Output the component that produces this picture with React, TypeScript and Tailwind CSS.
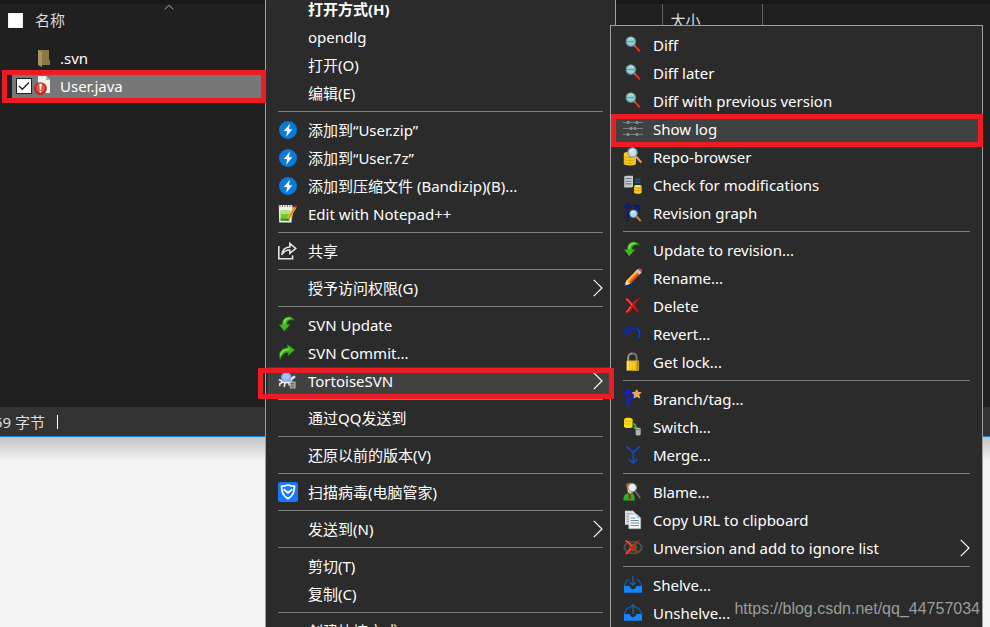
import type { ReactNode } from "react";

type MenuEntry =
    | { kind: "separator" }
    | {
        kind: "item";
        label: string;
        icon?: ReactNode;
        bold?: boolean;
        active?: boolean;
        submenu?: boolean;
    };

function Icon({ children }: { children: ReactNode }) {
    return (
        <svg viewBox="0 0 20 20" className="h-5 w-5" fill="none" aria-hidden="true">
        {children}
        </svg>
    );
}

function BandizipIcon() {
    return (
        <Icon>
        <circle cx="10" cy="10" r="9" fill="#0a7bdb" />
        <path d="M11.8 3.8 5.8 11H9l-.7 5.8 6-7.6H11z" fill="#fff" />
        </Icon>
    );
}

function NotepadIcon() {
    return (
        <Icon>
        <path d="M.8 1h13.6l-1.2 17.5H1.2z" fill="#f1f1ec" />
        <path d="M2.4 6.5h9.8l-.8 10.3H2.6z" fill="#74c52c" />
        <path d="M2.4 6.5h9.8l-.2 3.4H2.4z" fill="#b7e37e" />
        <path d="M2.6 14.5h9l-.2 2.3H2.6z" fill="#3f9a1f" />
        <path d="M2 1v2M4.5 1v2M7 1v2M9.5 1v2M12 1v2" stroke="#777" />
        <path d="M14.5 3 15 6l-2 12.5" stroke="#b5b5b5" />
        <path d="m16.2 2 2.5 1.6-7.6 11.6-2.6 1.6.3-3z" fill="#f4ae28" />
        <path d="m17.6 2.8-7.4 12.1" stroke="#d17d12" />
        <path d="m8.8 14.4-.3 2.4 2-1.2z" fill="#3a2b17" />
        <path d="m16.8.8 2.4 1.5-.8 1.6-2.6-1.5z" fill="#b91e29" />
        </Icon>
    );
}

function ShareIcon() {
    return (
        <Icon>
        <path d="M.8 5v12.8h13.8v-3.4" stroke="#e4e4e4" strokeWidth="1.6" />
        <path
            d="M3.8 13.8C4.2 9.1 6.8 6.3 11.8 6V2.4l6 5-6 5V9.1c-3.6 0-6.2 1.5-8 4.7z"
            stroke="#e4e4e4"
            strokeWidth="1.5"
        />
        </Icon>
    );
}

function UpdateIcon() {
    return (
        <Icon>
        <path
            d="M16.5 5.3C14.6 1.8 9.9.9 6.8 3.2 4.9 4.6 4.2 6.6 4.3 9.5H1.2l5 6.7 5.9-6.7H9c-.2-3.6 2.6-5.7 7.5-4.2z"
            fill="#43b824"
            stroke="#237c16"
            strokeWidth=".7"
        />
        <path d="M6 9c-.2-3.6 2.4-5.9 6.3-5.8" stroke="#92e765" strokeWidth="1.3" />
        </Icon>
    );
}

function CommitIcon() {
    return (
        <Icon>
        <path
            d="M2.2 16.5C-.2 10.7 2.5 5.5 9.6 4.8V1.6L16.6 7l-6.4 5.7V9.4c-4 0-6.5 2.2-8 7.1z"
            fill="#43b824"
            stroke="#237c16"
            strokeWidth=".7"
        />
        <path d="M2.6 12.5c.5-4 3.3-6.2 8.2-6.2" stroke="#92e765" strokeWidth="1.3" />
        </Icon>
    );
}

function TortoiseIcon() {
    return (
        <Icon>
        <path d="m.8 8.6 3.4 1.2M4.6 11.4 2 12.4l-.4 2.8M7 12l-.8 4M10.8 11.6l.6 3" stroke="#dfe3ea" strokeWidth="1.7" />
        <path d="m12.5 9 4.6-4" stroke="#e7eaf0" strokeWidth="2.4" />
        <ellipse cx="8.3" cy="6.2" rx="5.2" ry="4.8" fill="#91b0ef" />
        <ellipse cx="8" cy="5.6" rx="3" ry="2.6" fill="#a9c4f8" />
        <path d="M3 9.8c3 2.4 7.6 2.4 10.8 0" stroke="#f5f5f5" strokeWidth="1.6" />
        <path d="M15.8 1.5h3v3l-1.5 1.2-1.8-1.6z" fill="#125f8e" />
        <path d="M11.8 10.5h5.8v7h-5.8z" fill="#a9a9a9" />
        <path d="M13 12.5h3.2M13 14.2h3.2M13 15.9h3.2" stroke="#555" strokeWidth=".8" />
        </Icon>
    );
}

function ShieldIcon() {
    return (
        <Icon>
        <rect width="20" height="20" rx="2.5" fill="#1677ff" />
        <path d="M10 3c2 .8 4 1.1 6.4 1.1.3 6.4-1.5 9.8-6.4 12.6-4.9-2.8-6.7-6.2-6.4-12.6C6 4.1 8 3.8 10 3z" stroke="#fff" strokeWidth="1.8" />
        <path d="m5.7 7.3 4.3 3.5 4.3-3.5" stroke="#fff" strokeWidth="1.8" />
        </Icon>
    );
}

function DiffIcon() {
    return (
        <Icon>
        <path d="m11.5 10.5 5.3 5.8" stroke="#e9301c" strokeWidth="2" />
        <path d="m10.7 9.7 1.5 1.6" stroke="#888" strokeWidth="2" />
        <circle cx="7.8" cy="6.6" r="4.7" fill="#8fd2d9" stroke="#75868a" strokeWidth="1.2" />
        <path d="M4.3 6.6h7" stroke="#4e9fac" />
        <path d="M5 4.6c1-1.7 3.5-2.2 5-.6" stroke="#d4f4f5" />
        </Icon>
    );
}

function LogIcon() {
    return (
        <Icon>
        <path d="M0 3.5h20M0 9.5h20M0 15.5h20" stroke="#7e7e7e" />
        <path d="M5 2v3M14 2v3M8 8v3M12 8v3M5 14v3M14 14v3" stroke="#8b8b8b" strokeWidth="2.4" />
        </Icon>
    );
}

function RepoIcon() {
    return (
        <Icon>
        <path d="M.8 6.5c0-2.5 12.2-2.5 12.2 0v10c0 2.6-12.2 2.6-12.2 0z" fill="#f6cf22" />
        <path d="M.8 9.4c1 1.6 11 1.6 12.2 0M.8 12.2c1 1.6 11 1.6 12.2 0M.8 15c1 1.6 11 1.6 12.2 0M7 8v10" stroke="#d19a0a" strokeWidth=".8" />
        <path d="m13 9.5 5.3 6" stroke="#dba56b" strokeWidth="2" />
        <circle cx="9.5" cy="5.4" r="4.6" fill="#c4def0" stroke="#8796a3" strokeWidth="1.2" />
        <path d="M7 4.6c.5-1.5 2-2.1 3.6-1.6" stroke="#fff" />
        </Icon>
    );
}

function ModificationsIcon() {
    return (
        <Icon>
        <path d="M1.2 1.5 3 .8h7v11l-1.2.8H1.2z" fill="#c3c9cd" />
        <path d="M2.5 3.5h6M2.5 6.2h6M2.5 8.9h6" stroke="#717b82" strokeWidth="1.1" />
        <path d="M12 4.5h5.5M12 7.3h5.5" stroke="#0c638e" strokeWidth="1.5" />
        <path d="M11 11.2c0-1.7 7.6-1.7 7.6 0v6.2c0 1.7-7.6 1.7-7.6 0z" fill="#f7cf1d" />
        <path d="M11 12.2c1.2 1.2 6.6 1.2 7.6 0M11 14.8c1.2 1.2 6.6 1.2 7.6 0" stroke="#c88f0b" strokeWidth=".8" />
        <ellipse cx="14.8" cy="11.1" rx="3" ry=".9" fill="#fff177" />
        </Icon>
    );
}

function GraphIcon() {
    return (
        <Icon>
        <path d="M4.5 19V2M.5 5l4-3.5L8.5 5M5 12l10-9M9.8 2.7h6v5.6" stroke="#0b187d" strokeWidth="1.8" />
        <path d="m13.5 13.5 4.2 4.7" stroke="#ef7b24" strokeWidth="2" />
        <circle cx="10.5" cy="10.8" r="3.8" fill="#b7dcf2" stroke="#728da4" />
        <path d="M8.6 10c.5-1.3 1.5-1.8 2.8-1.5" stroke="#fff" />
        </Icon>
    );
}

function RenameIcon() {
    return (
        <Icon>
        <path d="M1.5 17.8 3.7 12 14 1.7l3.8-.5.4 3.8L7.5 15.8z" fill="#f37b1b" />
        <path d="M4.5 13 14 3.2" stroke="#ffc061" strokeWidth="1.7" />
        <path d="m7.2 15 9.3-9.4" stroke="#ca3a13" strokeWidth="1.4" />
        <path d="m12.6 3 2-2 3.7.1.2 3.5-2.1 2z" fill="#c8c8c5" />
        <path d="m14.7 1 1.8-.8 2 1.5-.4 2.6z" fill="#dc4338" />
        <path d="M1.5 17.8 3.6 12l3.8 3.8z" fill="#f4d5a2" />
        <path d="M1 18.2 2 16l1.6 1.6z" fill="#283a8d" />
        <path d="M3 18.5h8" stroke="#142c78" />
        </Icon>
    );
}

function DeleteIcon() {
    return (
        <Icon>
        <path d="M2 3c2-2.5 3.8-.5 7.7 4.2C12.3 4.1 15 2.1 18 1.8c-3 2-5 4.4-6.7 7.2l4.7 6.4-2 .4-4.2-4.3c-1.6 2.8-3.5 5.4-6 5.8-1.6-.2-1.7-1.4.2-3.2L7.6 9z" fill="#d41515" />
        <path d="M3 3.2c2.3.7 4.4 3.8 6.2 6M3.7 15.8c1.5-1.5 3-3.5 4.2-5.2" stroke="#f47d70" />
        </Icon>
    );
}

function RevertIcon() {
    return (
        <Icon>
        <path
            d="M1.2 2.6v7.6h8L6.3 7.6c2-1.9 4.9-2.4 7-1 2.5 1.7 2.7 5.4.9 9.8 3.4-2.7 4.7-7.4 2.3-11-2.6-3.7-8.4-4-12.4-.2z"
            fill="#0929a6"
        />
        <path d="M13.6 3.8c3.4 2.2 3.8 6.4 2 10.2" stroke="#1e4fd0" />
        </Icon>
    );
}

function LockIcon() {
    return (
        <Icon>
        <path d="M5.4 10V5.2c0-5 8.2-5 8.2 0V10" stroke="#77766f" strokeWidth="2" />
        <path d="M5 9V5c.3-2.3 2-3.4 4-3.5" stroke="#bcbcb4" strokeWidth=".8" />
        <rect x="3.5" y="8.5" width="12.4" height="10.3" rx=".8" fill="#edbd19" />
        <path d="M5 9.5v8.4" stroke="#fff073" strokeWidth="1.5" />
        <path d="M14.5 9v9.3" stroke="#b77d08" strokeWidth="1.8" />
        <path d="M7.8 10v7.5M10.8 10v7.5" stroke="#f8da42" />
        </Icon>
    );
}

function BranchIcon() {
    return (
        <Icon>
        <path d="M4.5 18.8V1.5M.5 5l4-3.8L8.5 5M4.8 12.8l5-4.2V5" stroke="#1020df" strokeWidth="1.8" />
        <path d="m8 9 3.8-2.2" stroke="#1020df" strokeWidth="1.8" />
        <path d="m13.7.7 1.3 2.7 3 .2-2.2 2.2.9 3-3-1.4-2.6 1.5.5-3.1-2.3-2 3.1-.6z" fill="#f5a33c" stroke="#ffe0a1" strokeWidth=".6" />
        </Icon>
    );
}

function SwitchIcon() {
    return (
        <Icon>
        <path d="M1 2.5c0-2.2 8.6-2.2 8.6 0v7c0 2-8.6 2-8.6 0z" fill="#fbdc16" />
        <path d="M1 3.4c1.2 1.2 7.4 1.2 8.6 0M1 6.4c1.2 1.2 7.4 1.2 8.6 0" stroke="#dcb010" strokeWidth=".7" />
        <path d="M9 6c3.4-.3 4.7 1.2 4.5 4h1.7l-3.1 2.8L9.8 10h1.8c0-1.7-.8-2.4-2.6-2.4z" fill="#43af22" />
        <path d="M12.7 11.8c0-1.3 5-1.3 5 0v5.8c0 1.3-5 1.3-5 0z" fill="#b1b4b5" />
        <path d="M12.7 12.3c.8.7 4.2.7 5 0" stroke="#707577" />
        </Icon>
    );
}

function MergeIcon() {
    return (
        <Icon>
        <path d="m3.5 1.5 6.8 6 6.5-6M10.3 7.3V18M6 14l4.3 4.2 4.3-4.2" stroke="#124bb9" strokeWidth="1.9" />
        </Icon>
    );
}

function BlameIcon() {
    return (
        <Icon>
        <path d="M3 2.6C4.5.4 9-.2 11 2.5v6.8L8 12 4.8 10.2z" fill="#a86a38" />
        <path d="M4.7 4.5h4.5v5.7L7 12l-2.3-2z" fill="#efc394" />
        <path d="M.4 18.4c0-4.5 1.4-6.4 4.2-7.1L6.5 13l2.7-2c2.2 1.3 2.8 4 2.5 7.4z" fill="#28b321" />
        <path d="m6 12 1.4-.2.8 4.3-1.3 1.6-1.4-1.6z" fill="#bd1915" />
        <circle cx="9.3" cy="5.6" r="4.2" fill="#e9eff1" stroke="#888f91" />
        <path d="m12.3 9.3 5 6.8" stroke="#858585" strokeWidth="1.2" />
        </Icon>
    );
}

function CopyIcon() {
    return (
        <Icon>
        <path d="M2 .8h8l3 3v11H2z" fill="#d9dfe4" />
        <path d="M3.5 4h5M3.5 6.5h3M3.5 9h3M3.5 11.5h3" stroke="#8c9db2" />
        <path d="M5.8 4.2h8L17.7 8v10.7H5.8z" fill="#f7f8f9" stroke="#a9b0b7" strokeWidth=".6" />
        <path d="M13.6 4.5v3.7h4" fill="#b8c2ce" />
        <path d="M7.6 8h4.5M7.6 10.5H16M7.6 13H16M7.6 15.5H16" stroke="#6c8aad" strokeWidth="1.1" />
        </Icon>
    );
}

function UnversionIcon() {
    return (
        <Icon>
        <ellipse cx="10" cy="9.5" rx="8.6" ry="5.8" stroke="#4f5150" strokeWidth="2" />
        <circle cx="10" cy="9.5" r="4.4" fill="#168d31" stroke="#154523" strokeWidth="1.5" />
        <path d="M2 3.2c2.7-2 4.8.8 7.6 3.7 2.4-2.8 5.2-5.2 7.7-5.5-2.3 2.4-4.4 5-5.7 7.4l3.8 5-1.9.7-3.8-3.4C7.4 14.2 5 16.8 2.2 17c1-3 3.1-5.9 5.2-8.2z" fill="#d41d1b" />
        <path d="M2.5 2.8c2 0 4.3 3.1 6.3 5.2M3 16c1.5-1.4 3-3.6 4.7-5.5" stroke="#f28070" />
        </Icon>
    );
}

function ShelfIcon({ up = false }: { up?: boolean }) {
    return (
        <Icon>
        <path d="M1 11.2 4.2 5h2.5M13.3 5h2.4L19 11.2" stroke="#1762ac" strokeWidth="1.1" />
        <path d="M1 11h5.7c.4 4.2 6.2 4.2 6.6 0H19v6.8H1z" fill="#1683ff" />
        <path d={up ? "M10 11V2M6.5 5.2 10 1.7l3.5 3.5" : "M10 1v9M7 7.2l3 3 3-3"} stroke="#176bb9" strokeWidth="1.1" />
        </Icon>
    );
}

const separator: MenuEntry = { kind: "separator" };

const fileMenu: MenuEntry[] = [
    { kind: "item", label: "打开方式(H)", bold: true },
    { kind: "item", label: "opendlg" },
    { kind: "item", label: "打开(O)" },
    { kind: "item", label: "编辑(E)" },
    separator,
    { kind: "item", label: "添加到“User.zip”", icon: <BandizipIcon /> },
    { kind: "item", label: "添加到“User.7z”", icon: <BandizipIcon /> },
    { kind: "item", label: "添加到压缩文件 (Bandizip)(B)...", icon: <BandizipIcon /> },
    { kind: "item", label: "Edit with Notepad++", icon: <NotepadIcon /> },
    separator,
    { kind: "item", label: "共享", icon: <ShareIcon /> },
    separator,
    { kind: "item", label: "授予访问权限(G)", submenu: true },
    separator,
    { kind: "item", label: "SVN Update", icon: <UpdateIcon /> },
    { kind: "item", label: "SVN Commit...", icon: <CommitIcon /> },
    { kind: "item", label: "TortoiseSVN", icon: <TortoiseIcon />, active: true, submenu: true },
    separator,
    { kind: "item", label: "通过QQ发送到" },
    separator,
    { kind: "item", label: "还原以前的版本(V)" },
    separator,
    { kind: "item", label: "扫描病毒(电脑管家)", icon: <ShieldIcon /> },
    separator,
    { kind: "item", label: "发送到(N)", submenu: true },
    separator,
    { kind: "item", label: "剪切(T)" },
    { kind: "item", label: "复制(C)" },
    separator,
    { kind: "item", label: "创建快捷方式(S)" },
];

const svnMenu: MenuEntry[] = [
    { kind: "item", label: "Diff", icon: <DiffIcon /> },
    { kind: "item", label: "Diff later", icon: <DiffIcon /> },
    { kind: "item", label: "Diff with previous version", icon: <DiffIcon /> },
    { kind: "item", label: "Show log", icon: <LogIcon />, active: true },
    { kind: "item", label: "Repo-browser", icon: <RepoIcon /> },
    { kind: "item", label: "Check for modifications", icon: <ModificationsIcon /> },
    { kind: "item", label: "Revision graph", icon: <GraphIcon /> },
    separator,
    { kind: "item", label: "Update to revision...", icon: <UpdateIcon /> },
    { kind: "item", label: "Rename...", icon: <RenameIcon /> },
    { kind: "item", label: "Delete", icon: <DeleteIcon /> },
    { kind: "item", label: "Revert...", icon: <RevertIcon /> },
    { kind: "item", label: "Get lock...", icon: <LockIcon /> },
    separator,
    { kind: "item", label: "Branch/tag...", icon: <BranchIcon /> },
    { kind: "item", label: "Switch...", icon: <SwitchIcon /> },
    { kind: "item", label: "Merge...", icon: <MergeIcon /> },
    separator,
    { kind: "item", label: "Blame...", icon: <BlameIcon /> },
    { kind: "item", label: "Copy URL to clipboard", icon: <CopyIcon /> },
    { kind: "item", label: "Unversion and add to ignore list", icon: <UnversionIcon />, submenu: true },
    separator,
    { kind: "item", label: "Shelve...", icon: <ShelfIcon /> },
    { kind: "item", label: "Unshelve...", icon: <ShelfIcon up /> },
];

function MenuList({ entries }: { entries: MenuEntry[] }) {
    return (
        <div role="menu" className="flex flex-col px-0.5">
        {entries.map((entry, index) =>
            entry.kind === "separator" ? (
            <div key={index} role="separator" className="mx-2.5 flex h-[9px] items-center">
                <span className="h-px w-full bg-[#808080]" />
            </div>
            ) : (
            <button
                key={index}
                type="button"
                role="menuitem"
                className={`flex h-7 items-center gap-2.5 px-2.5 text-left whitespace-nowrap ${
                entry.active ? "bg-[#414141]" : ""
                } ${entry.bold ? "font-bold" : ""}`}
            >
                <span className="h-5 w-5 shrink-0">{entry.icon}</span>
                <span className="grow">{entry.label}</span>
                {entry.submenu && (
                <svg viewBox="0 0 10 18" className="h-[18px] w-2.5" fill="none" aria-hidden="true">
                    <path d="m.8.8 8.2 8.2-8.2 8.2" stroke="#fff" strokeWidth="1.2" />
                </svg>
                )}
            </button>
            )
        )}
        </div>
    );
}

function FolderIcon() {
    return (
        <svg viewBox="0 0 14 18" className="h-[18px] w-3.5" aria-hidden="true">
        <path d="M1 1h11v10h1v5H4z" fill="#8c7845" />
        <path d="m1 1 4 2v15l-4-2z" fill="#a99362" />
        </svg>
    );
}

function JavaFileIcon() {
    return (
        <svg viewBox="0 0 18 20" className="h-5 w-[18px]" aria-hidden="true">
        <path d="M4 0h8l4 4v13H4z" fill="#f2f2f2" />
        <path d="M12 0v4h4z" fill="#b2b2b2" />
        <circle cx="6.5" cy="12.5" r="6.3" fill="#b9271b" />
        <circle cx="6.5" cy="12" r="4.7" fill="#d9553f" />
        <path d="M5.3 7.8h2.4l-.5 6H5.8zM5.6 14.8h1.8v1.7H5.6z" fill="#fff" />
        </svg>
    );
}

function FileTable() {
    return (
        <table className="w-full table-fixed border-collapse text-left">
        <thead>
            <tr className="h-8">
            <th className="relative w-[662px] p-0 font-normal">
                <div className="flex items-center gap-3 pl-2">
                <input
                    type="checkbox"
                    aria-label="全选"
                    className="h-[15px] w-[15px] appearance-none border border-[#efefef] bg-white"
                />
                <span className="text-[#dedede]">名称</span>
                </div>
                <svg viewBox="0 0 10 6" className="absolute top-0 left-[164px] h-1.5 w-2.5" fill="none" aria-hidden="true">
                <path d="m.7 5.3 4.3-4 4.3 4" stroke="#aaa" />
                </svg>
            </th>
            <th className="w-[100px] border-x border-[#636363] p-0 pl-2 font-normal text-[#dedede]">大小</th>
            <th className="p-0" />
            </tr>
            <tr className="h-2" />
        </thead>
        <tbody>
            <tr className="h-7">
            <td className="p-0">
                <div className="flex items-center gap-[9px] pl-[37px]">
                <FolderIcon />
                <span>.svn</span>
                </div>
            </td>
            <td />
            <td />
            </tr>
            <tr className="h-7">
            <td className="p-0 pl-3">
                <label className="flex h-7 items-center bg-[#777] pl-1">
                <span className="relative h-4 w-4">
                    <input
                    type="checkbox"
                    defaultChecked
                    className="peer block h-4 w-4 appearance-none border border-[#222] bg-white"
                    />
                    <svg viewBox="0 0 16 16" className="pointer-events-none absolute inset-0 hidden h-4 w-4 peer-checked:block" fill="none" aria-hidden="true">
                    <path d="m3 8 3.3 3.3L13 4.5" stroke="#222" strokeWidth="1.4" />
                    </svg>
                </span>
                <span className="mr-2 ml-0.5">
                    <JavaFileIcon />
                </span>
                <span>User.java</span>
                </label>
            </td>
            <td />
            <td />
            </tr>
        </tbody>
        </table>
    );
}

export default function App() {
    return (
        <main className="relative h-screen overflow-hidden bg-[#f4f4f4] font-['Noto_Sans','Noto_Sans_CJK_SC',sans-serif] text-[15px] leading-5 text-white">
        <section className="border-b border-[#1883d7] bg-[#202020]">
            <div className="h-1 bg-[#191919]" />
            <div className="h-[403px]">
            <FileTable />
            </div>
            <footer className="flex h-[29px] items-center gap-3 bg-[#333] text-[#dedede]">
            <span className="-ml-1.5">59 字节</span>
            <span className="h-3.5 w-px bg-white" />
            </footer>
        </section>
        <div className="h-6 bg-linear-to-b from-[#c4c4c4] to-[#f4f4f4]" />

        <div className="absolute -top-1.5 left-[265px] w-[351px] border border-[#a0a0a0] bg-[#2b2b2b] pb-2">
            <MenuList entries={fileMenu} />
        </div>
        <div className="absolute top-[25px] left-[610px] w-[373px] border border-[#a0a0a0] bg-[#2b2b2b] py-[5px]">
            <MenuList entries={svnMenu} />
        </div>

        <div className="pointer-events-none absolute top-[70px] left-0.5 h-[33px] w-[264px] border-5 border-[#ed1c24]" />
        <div className="pointer-events-none absolute top-[368px] left-[258px] h-[31px] w-[356px] border-5 border-[#ed1c24]" />
        <div className="pointer-events-none absolute top-[114px] left-[611px] h-[33px] w-[372px] border-5 border-[#ed1c24]" />

        <p className="absolute right-2.5 bottom-2 font-['Liberation_Sans',sans-serif] text-base leading-5 text-[#9c9c9c]">
            https://blog.csdn.net/qq_44757034
        </p>
        </main>
    );
}
